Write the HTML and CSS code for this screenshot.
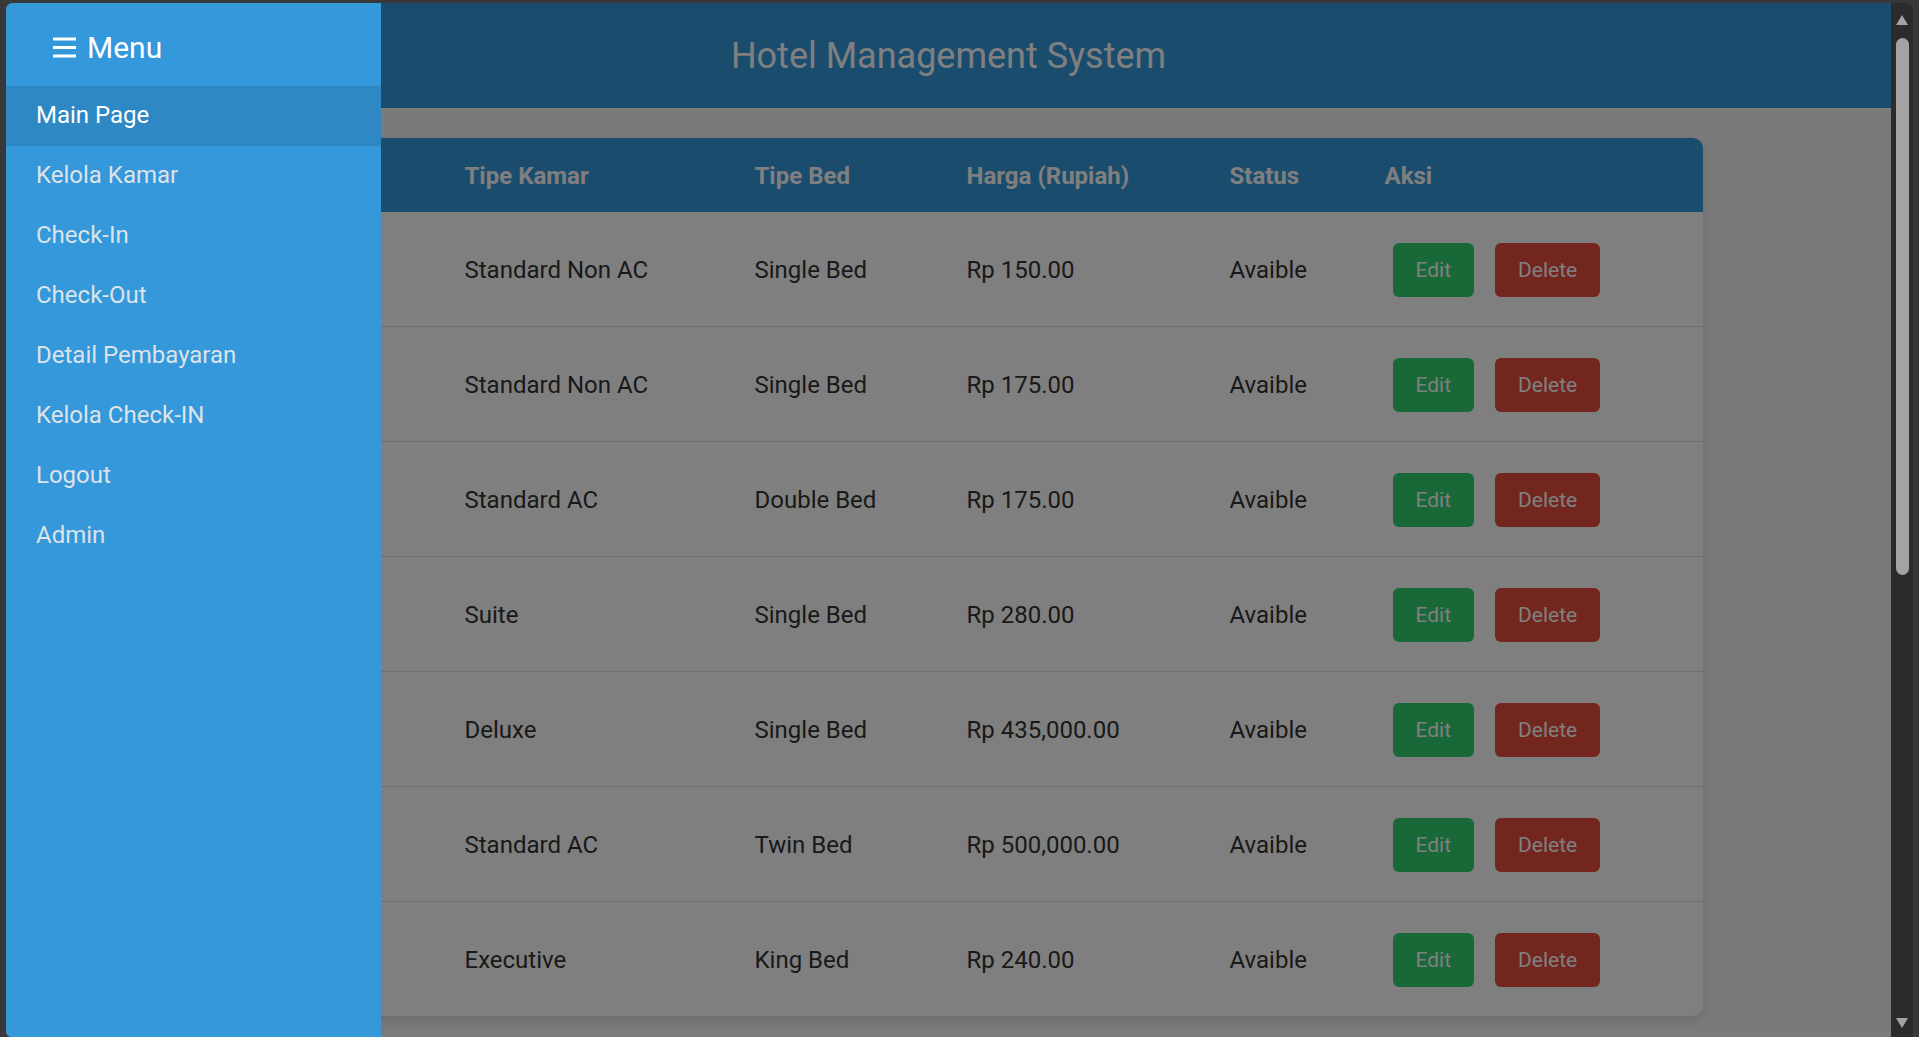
FILE: index.html
```html
<!DOCTYPE html>
<html lang="id">
<head>
<meta charset="utf-8">
<title>Hotel Management System</title>
<link rel="stylesheet" href="styles.css">
</head>
<body>
<div class="window">
  <div class="viewport">
    <header class="topbar">
      <h1 class="title">Hotel Management System</h1>
    </header>
    <main class="content">
      <div class="table-card">
        <table class="rooms">
          <colgroup>
            <col class="c-no"><col class="c-kamar"><col class="c-bed"><col class="c-harga"><col class="c-status"><col class="c-aksi">
          </colgroup>
          <thead>
            <tr><th>No</th><th>Tipe Kamar</th><th>Tipe Bed</th><th>Harga (Rupiah)</th><th>Status</th><th>Aksi</th></tr>
          </thead>
          <tbody>
            <tr><td>1</td><td>Standard Non AC</td><td>Single Bed</td><td>Rp 150.00</td><td>Avaible</td><td><div class="actions"><a class="btn btn-edit">Edit</a><a class="btn btn-delete">Delete</a></div></td></tr>
            <tr><td>2</td><td>Standard Non AC</td><td>Single Bed</td><td>Rp 175.00</td><td>Avaible</td><td><div class="actions"><a class="btn btn-edit">Edit</a><a class="btn btn-delete">Delete</a></div></td></tr>
            <tr><td>3</td><td>Standard AC</td><td>Double Bed</td><td>Rp 175.00</td><td>Avaible</td><td><div class="actions"><a class="btn btn-edit">Edit</a><a class="btn btn-delete">Delete</a></div></td></tr>
            <tr><td>4</td><td>Suite</td><td>Single Bed</td><td>Rp 280.00</td><td>Avaible</td><td><div class="actions"><a class="btn btn-edit">Edit</a><a class="btn btn-delete">Delete</a></div></td></tr>
            <tr><td>5</td><td>Deluxe</td><td>Single Bed</td><td>Rp 435,000.00</td><td>Avaible</td><td><div class="actions"><a class="btn btn-edit">Edit</a><a class="btn btn-delete">Delete</a></div></td></tr>
            <tr><td>6</td><td>Standard AC</td><td>Twin Bed</td><td>Rp 500,000.00</td><td>Avaible</td><td><div class="actions"><a class="btn btn-edit">Edit</a><a class="btn btn-delete">Delete</a></div></td></tr>
            <tr><td>7</td><td>Executive</td><td>King Bed</td><td>Rp 240.00</td><td>Avaible</td><td><div class="actions"><a class="btn btn-edit">Edit</a><a class="btn btn-delete">Delete</a></div></td></tr>
          </tbody>
        </table>
      </div>
    </main>
    <div class="overlay"></div>
    <nav class="sidebar">
      <div class="side-head">
        <svg class="burger" width="23" height="21" viewBox="0 0 23 21" aria-hidden="true">
          <rect x="0" y="0.5" width="23" height="3" fill="#fff"/>
          <rect x="0" y="9" width="23" height="3" fill="#fff"/>
          <rect x="0" y="17.5" width="23" height="3" fill="#fff"/>
        </svg>
        <span class="menu-label">Menu</span>
      </div>
      <ul class="side-menu">
        <li class="item active">Main Page</li>
        <li class="item">Kelola Kamar</li>
        <li class="item">Check-In</li>
        <li class="item">Check-Out</li>
        <li class="item">Detail Pembayaran</li>
        <li class="item">Kelola Check-IN</li>
        <li class="item">Logout</li>
        <li class="item">Admin</li>
      </ul>
    </nav>
  </div>
  <div class="scrollbar">
    <span class="arrow-up"></span>
    <span class="thumb"></span>
    <span class="spacer"></span>
    <span class="arrow-down"></span>
  </div>
</div>
</body>
</html>
```
FILE: styles.css
```css
* { box-sizing: border-box; }

html, body {
  margin: 0;
  padding: 0;
  height: 1037px;
  overflow: hidden;
  background: #383838;
  font-family: Roboto, "Liberation Sans", sans-serif;
}

.window {
  margin: 3px 6px 0 6px;
  height: 1034px;
  display: flex;
  border-radius: 7px 8px 0 6px;
  overflow: hidden;
}

.viewport {
  flex: 1;
  position: relative;
  background: #f4f4f4;
  overflow: hidden;
}

.topbar {
  height: 105px;
  background: #3498db;
  display: flex;
  align-items: center;
  justify-content: center;
}

.title {
  margin: 0;
  color: #fff;
  font-size: 36px;
  font-weight: 400;
  line-height: 1;
}

.content {
  padding-top: 30px;
}

.table-card {
  width: 1508px;
  margin: 0 auto;
  background: #fff;
  border-radius: 10px;
  overflow: hidden;
  box-shadow: 0 4px 12px rgba(0, 0, 0, 0.12);
}

.rooms {
  width: 100%;
  border-collapse: separate;
  border-spacing: 0;
  table-layout: fixed;
}

.c-no { width: 250px; }
.c-kamar { width: 290px; }
.c-bed { width: 212px; }
.c-harga { width: 263px; }
.c-status { width: 155px; }
.c-aksi { width: 338px; }

.rooms th {
  background: #3498db;
  color: #fff;
  font-size: 24px;
  font-weight: 700;
  text-align: left;
  padding: 24px 20px 22px 20px;
  line-height: 28px;
}

.rooms td {
  font-size: 24px;
  color: #333;
  padding: 31px 20px 29px 20px;
  border-bottom: 1px solid #ddd;
  line-height: 28px;
  vertical-align: middle;
}

.rooms tbody tr:last-child td {
  border-bottom: none;
}

.actions {
  display: flex;
  gap: 21px;
  margin-left: 8px;
}

.btn {
  display: block;
  font-size: 21px;
  line-height: 24px;
  padding: 15px 23px;
  color: #fff;
  border-radius: 6px;
  text-decoration: none;
}

.btn-edit { background: #30d070; }
.btn-delete { background: #e74c3c; }

.overlay {
  position: absolute;
  inset: 0;
  background: rgba(0, 0, 0, 0.5);
  z-index: 1;
}

.sidebar {
  position: absolute;
  top: 0;
  left: 0;
  bottom: 0;
  width: 375px;
  background: #3498db;
  z-index: 2;
}

.side-head {
  height: 83px;
  padding: 27px 0 0 47px;
  display: flex;
  align-items: flex-start;
  color: #fff;
}

.burger {
  margin-top: 7px;
  margin-right: 11px;
  flex: none;
}

.menu-label {
  font-size: 30px;
  line-height: 35px;
}

.side-menu {
  list-style: none;
  margin: 0;
  padding: 0;
}

.item {
  height: 60px;
  line-height: 59px;
  padding-left: 30px;
  font-size: 24px;
  color: #dde3e8;
}

.item.active {
  background: rgba(0, 0, 0, 0.1);
  color: #fff;
}

.scrollbar {
  width: 22px;
  flex: none;
  background: #2b2b2b;
  display: flex;
  flex-direction: column;
  align-items: center;
  padding: 12px 0 9px 0;
}

.arrow-up {
  width: 0;
  height: 0;
  border-left: 6px solid transparent;
  border-right: 6px solid transparent;
  border-bottom: 10px solid #a3a3a3;
}

.thumb {
  margin-top: 13px;
  width: 13px;
  height: 537px;
  border-radius: 7px;
  background: #a3a3a3;
}

.spacer { flex: 1; }

.arrow-down {
  width: 0;
  height: 0;
  border-left: 6px solid transparent;
  border-right: 6px solid transparent;
  border-top: 10px solid #a3a3a3;
}
```
